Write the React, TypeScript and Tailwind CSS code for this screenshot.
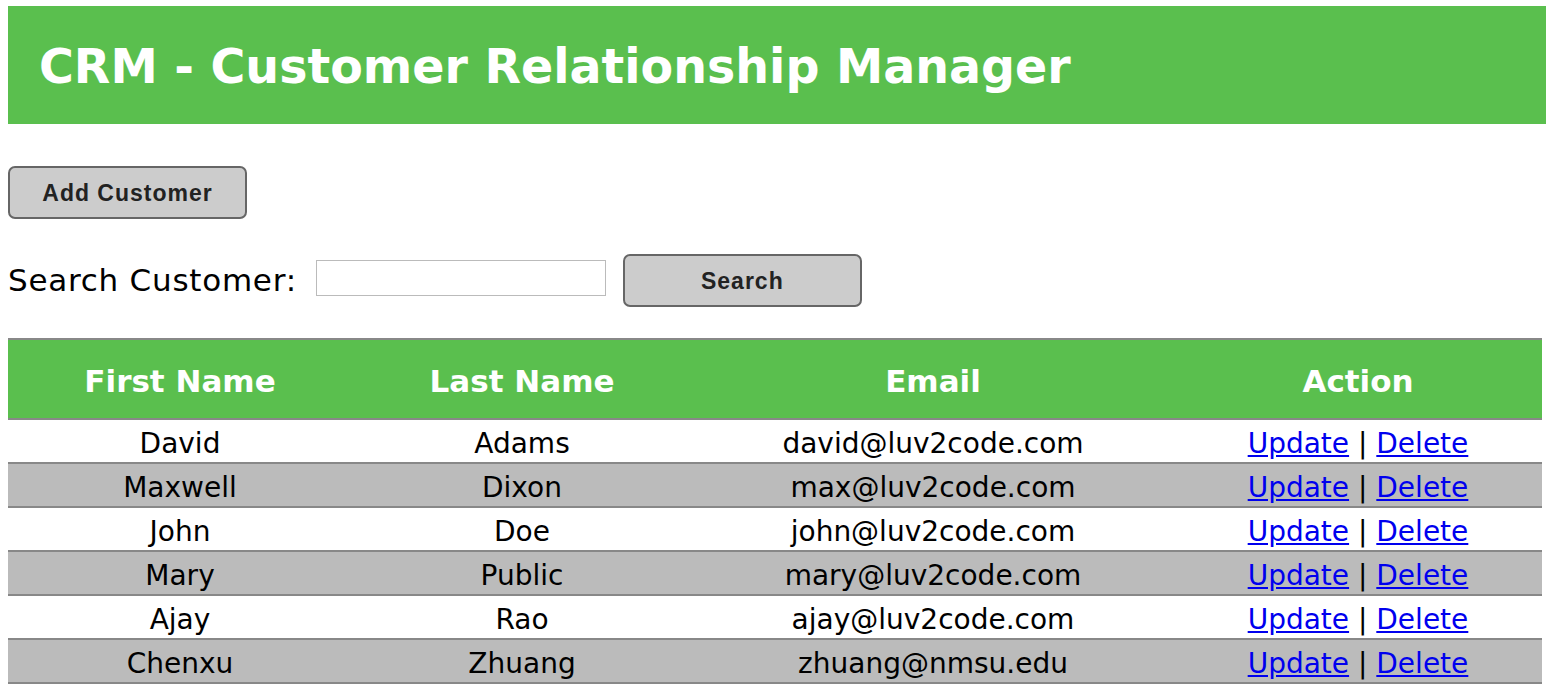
import React from "react";

const rows = [
  ["David", "Adams", "david@luv2code.com"],
  ["Maxwell", "Dixon", "max@luv2code.com"],
  ["John", "Doe", "john@luv2code.com"],
  ["Mary", "Public", "mary@luv2code.com"],
  ["Ajay", "Rao", "ajay@luv2code.com"],
  ["Chenxu", "Zhuang", "zhuang@nmsu.edu"],
];

export default function App() {
  return (
    <div className="bg-white min-h-[694px] px-[8px] pt-[6px] text-black">
      <div className="bg-[#5abf4e] h-[118px] flex items-center pl-[31px]">
        <h1 className="text-white font-bold text-[47.5px] leading-none mt-[3px] [font-family:'DejaVu_Sans',Verdana,sans-serif]">
          CRM - Customer Relationship Manager
        </h1>
      </div>
      <div className="mt-[42px]">
        <button className="w-[239px] h-[53px] rounded-[7px] border-2 border-[#666] bg-[#cccccc] text-[#222] font-bold text-[23px] tracking-[1px] pt-[2px] [font-family:'Liberation_Sans',Arial,sans-serif]">
          Add Customer
        </button>
      </div>
      <div className="mt-[35px] flex items-center h-[53px]">
        <span className="text-[31px] tracking-[0.75px] [font-family:'DejaVu_Sans',Verdana,sans-serif] mr-[19px]">Search Customer:</span>
        <div className="w-[290px] h-[36px] border border-[#bbb] mt-[-6px]"></div>
        <button className="ml-[17px] w-[239px] h-[53px] rounded-[7px] border-2 border-[#666] bg-[#cccccc] text-[#222] font-bold text-[23px] tracking-[1px] pt-[2px] [font-family:'Liberation_Sans',Arial,sans-serif]">
          Search
        </button>
      </div>
      <table className="mt-[31px] w-[1534px] border-collapse text-center [font-family:'DejaVu_Sans',Tahoma,sans-serif]">
        <thead>
          <tr className="bg-[#5abf4e] text-white border-t-2 border-b-2 border-[#888]">
            <th className="w-[344px] h-[80px] text-[31px] font-bold pt-[4px]">First Name</th>
            <th className="w-[340px] text-[31px] font-bold pt-[4px]">Last Name</th>
            <th className="w-[482px] text-[31px] font-bold pt-[4px]">Email</th>
            <th className="text-[31px] font-bold pt-[4px]">Action</th>
          </tr>
        </thead>
        <tbody>
          {rows.map((r, i) => (
            <tr key={i} className={`border-b-2 border-[#888] text-[28px] ${i % 2 === 1 ? "bg-[#bbbbbb]" : "bg-white"}`}>
              <td className="h-[44px] leading-none p-0 pt-[5px]">{r[0]}</td>
              <td className="leading-none p-0 pt-[5px]">{r[1]}</td>
              <td className="leading-none p-0 pt-[5px]">{r[2]}</td>
              <td className="leading-none p-0 pt-[5px]">
                <a className="text-[#0000ee] underline" href="#">Update</a> | <a className="text-[#0000ee] underline" href="#">Delete</a>
              </td>
            </tr>
          ))}
        </tbody>
      </table>
    </div>
  );
}
